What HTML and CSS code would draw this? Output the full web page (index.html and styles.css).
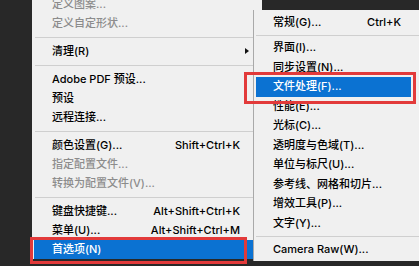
FILE: index.html
```html
<!DOCTYPE html>
<html>
<head>
<meta charset="utf-8">
<link rel="stylesheet" href="styles.css">
</head>
<body>
<div class="stage">
  <div class="menu main">
    <div class="item dis"><span class="lbl">定义图案...</span></div>
    <div class="item dis"><span class="lbl">定义自定形状...</span></div>
    <div class="sep"></div>
    <div class="item"><span class="lbl">清理(R)</span><span class="arrow"></span></div>
    <div class="sep"></div>
    <div class="item"><span class="lbl">Adobe PDF 预设...</span></div>
    <div class="item"><span class="lbl">预设</span></div>
    <div class="item"><span class="lbl">远程连接...</span></div>
    <div class="sep"></div>
    <div class="item"><span class="lbl">颜色设置(G)...</span><span class="key">Shift+Ctrl+K</span></div>
    <div class="item dis"><span class="lbl">指定配置文件...</span></div>
    <div class="item dis"><span class="lbl">转换为配置文件(V)...</span></div>
    <div class="sep"></div>
    <div class="item"><span class="lbl">键盘快捷键...</span><span class="key">Alt+Shift+Ctrl+K</span></div>
    <div class="item"><span class="lbl">菜单(U)...</span><span class="key">Alt+Shift+Ctrl+M</span></div>
    <div class="item active"><span class="lbl">首选项(N)</span></div>
  </div>

  <div class="menu sub">
    <div class="item"><span class="lbl">常规(G)...</span><span class="key">Ctrl+K</span></div>
    <div class="sep"></div>
    <div class="item"><span class="lbl">界面(I)...</span></div>
    <div class="item"><span class="lbl">同步设置(N)...</span></div>
    <div class="item active"><span class="lbl">文件处理(F)...</span></div>
    <div class="item"><span class="lbl">性能(E)...</span></div>
    <div class="item"><span class="lbl">光标(C)...</span></div>
    <div class="item"><span class="lbl">透明度与色域(T)...</span></div>
    <div class="item"><span class="lbl">单位与标尺(U)...</span></div>
    <div class="item"><span class="lbl">参考线、网格和切片...</span></div>
    <div class="item"><span class="lbl">增效工具(P)...</span></div>
    <div class="item"><span class="lbl">文字(Y)...</span></div>
    <div class="sep sep-last"></div>
    <div class="item"><span class="lbl">Camera Raw(W)...</span></div>
  </div>

  <div class="mark mark-main"></div>
  <div class="mark mark-sub"></div>
</div>
</body>
</html>
```

FILE: styles.css
```css
html, body {
  margin: 0;
  padding: 0;
  background: #282828;
  width: 419px;
  height: 266px;
  overflow: hidden;
}

.stage {
  position: relative;
  display: flow-root;
  width: 419px;
  height: 266px;
  font-family: Inter, "Noto Sans CJK SC", sans-serif;
  font-size: 11px;
  font-weight: 500;
  color: #000;
}

.menu {
  background: #f0f0f0;
  box-sizing: border-box;
}

.main {
  margin-left: 32px;
  margin-top: -5px;
  width: 230px;
  padding: 0 2px;
  display: flex;
  flex-direction: column;
}

.item {
  height: 19px;
  display: flex;
  align-items: center;
  justify-content: space-between;
  white-space: nowrap;
  line-height: 19px;
}

.main .item {
  padding: 0 20px 0 18px;
  position: relative;
}

.item.dis {
  color: #8c8c8c;
}

.item.active {
  background: #0b72d2;
  color: #fff;
}

.sep {
  height: 9px;
  display: flex;
  align-items: center;
}

.sep::before {
  content: "";
  display: block;
  width: 100%;
  height: 1px;
  background: #cfcfcf;
}

.main .sep {
  padding-left: 1px;
}

.arrow {
  position: absolute;
  left: 211px;
  top: 6px;
  width: 0;
  height: 0;
  border-top: 3.5px solid transparent;
  border-bottom: 3.5px solid transparent;
  border-left: 4px solid #111;
}

.sub {
  position: absolute;
  left: 253px;
  top: 10px;
  width: 166px;
  height: 251px;
  border-left: 1px solid #a9a9a9;
  padding: 2.5px 0 0 2px;
  display: flex;
  flex-direction: column;
}

.sub .item {
  height: 19.5px;
  padding: 0 18px 0 17px;
}

.sub .item.active {
  margin-right: 8px;
}

.sub .sep {
  height: 6px;
}

.sub .sep-last {
  height: 7px;
}

.mark {
  position: absolute;
  border: 3px solid #e23a3a;
  box-sizing: border-box;
}

.mark-main {
  left: 30px;
  top: 237px;
  width: 217px;
  height: 27px;
}

.mark-sub {
  left: 244px;
  top: 72px;
  width: 172px;
  height: 32px;
}
```
